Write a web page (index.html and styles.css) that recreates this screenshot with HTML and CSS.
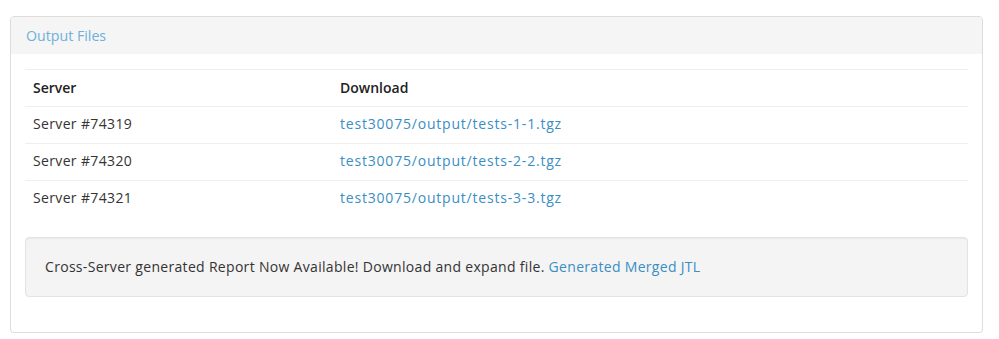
FILE: index.html
```html
<!DOCTYPE html>
<html>
<head>
<meta charset="utf-8">
<link rel="stylesheet" href="styles.css">
</head>
<body>
<div class="panel">
  <div class="panel-heading">
    <h3 class="panel-title">Output Files</h3>
  </div>
  <div class="panel-body">
    <table class="files">
      <thead>
        <tr><th class="col-server">Server</th><th>Download</th></tr>
      </thead>
      <tbody>
        <tr><td>Server #74319</td><td><a class="file-link" href="#">test30075/output/tests-1-1.tgz</a></td></tr>
        <tr><td>Server #74320</td><td><a class="file-link" href="#">test30075/output/tests-2-2.tgz</a></td></tr>
        <tr><td>Server #74321</td><td><a class="file-link" href="#">test30075/output/tests-3-3.tgz</a></td></tr>
      </tbody>
    </table>
    <div class="well">Cross-Server generated Report Now Available! Download and expand file. <a href="#">Generated Merged JTL</a></div>
  </div>
</div>
</body>
</html>
```
FILE: styles.css
```css
html, body {
  margin: 0;
  padding: 0;
  background: #fff;
}
body {
  padding: 16px 16px 0 10px;
  font-family: "Open Sans", "Noto Sans", sans-serif;
  font-size: 14px;
  line-height: 20px;
  letter-spacing: 0.35px;
  color: #333;
}
.panel {
  border: 1px solid #dddddd;
  border-radius: 4px;
  box-shadow: 0 1px 1px rgba(0,0,0,0.05);
  width: 973px;
  box-sizing: border-box;
}
.panel-heading {
  background: #f5f5f5;
  padding: 9px 15px 8px;
  border-radius: 3px 3px 0 0;
}
.panel-title {
  margin: 0;
  font-size: 14.2px;
  font-weight: normal;
  line-height: 20px;
  letter-spacing: 0;
  color: #6fb1d9;
}
.panel-body {
  padding: 15px 14px 35px 14px;
}
.files {
  width: 100%;
  border-collapse: collapse;
  margin-bottom: 20px;
}
.files th, .files td {
  text-align: left;
  padding: 8px 8px;
  border-top: 1px solid #eeeeee;
  line-height: 20px;
  font-size: 14px;
}
.files td {
  padding: 7px 8px 9px;
}
.files th {
  font-weight: 600;
  letter-spacing: 0;
  color: #222;
}
.col-server {
  width: 291px;
}
a {
  color: #3a8ec3;
  text-decoration: none;
}
.file-link {
  letter-spacing: 0.8px;
}
.well {
  background: #f4f4f4;
  border: 1px solid #e3e3e3;
  border-radius: 4px;
  padding: 19px 19px;
  line-height: 20px;
  letter-spacing: 0.31px;
  box-shadow: inset 0 1px 1px rgba(0,0,0,0.05);
}
```
